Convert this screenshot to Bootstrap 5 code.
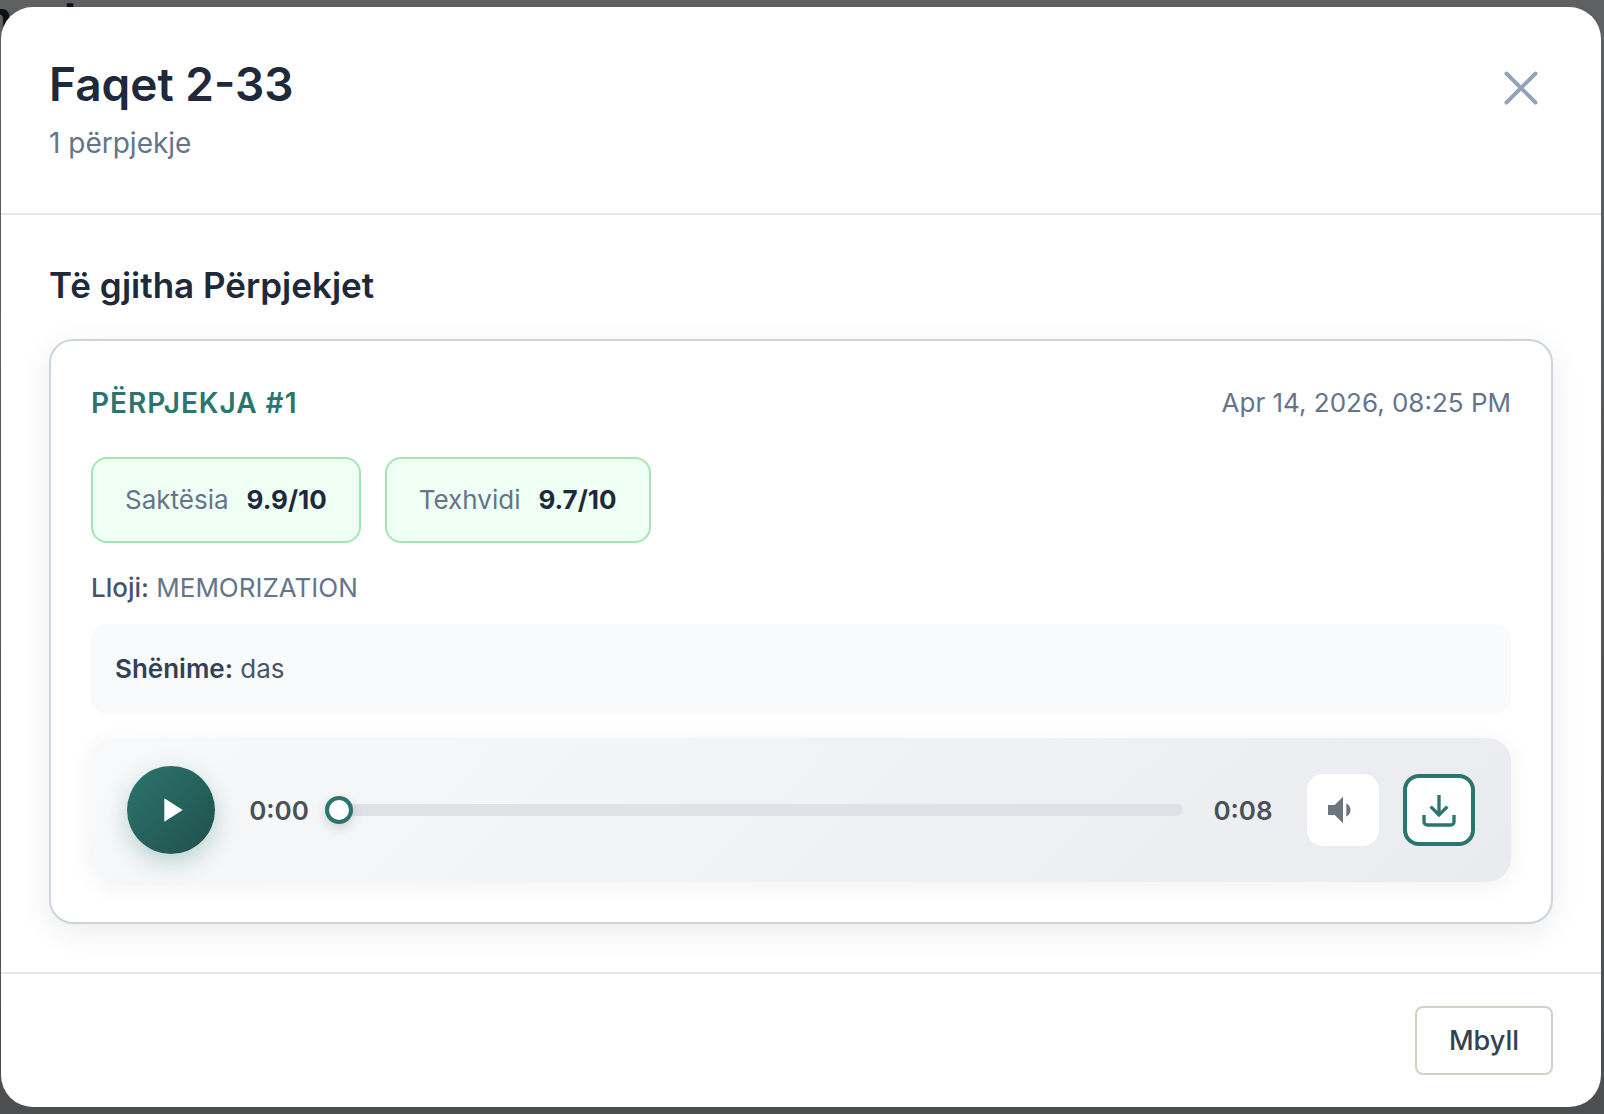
<!DOCTYPE html>
<html lang="sq">
<head>
<meta charset="utf-8">
<meta name="viewport" content="width=device-width, initial-scale=1">
<title>Faqet 2-33</title>
<link href="https://cdn.jsdelivr.net/npm/bootstrap@5.3.0/dist/css/bootstrap.min.css" rel="stylesheet">
<style>
  body { font-family: Inter, "Liberation Sans", sans-serif; background: linear-gradient(#5f6062, #525252 70%, #4d4e50); min-height: 100vh; overflow: hidden; color: #1e293b; }
  .behind-title { position: absolute; left: -28px; top: -11px; font-size: 44px; line-height: 56px; font-weight: 700; color: #0d1117; white-space: nowrap; }
  .sheet-wrap { position: relative; padding: 7px 3px 7px 1px; }
  .modal-content { border: 0; border-radius: 32px; min-height: calc(100vh - 14px); color: inherit; background: #fff; }
  .modal-header { padding: 48px; border-bottom: 2px solid #e2e8f0; border-radius: 0; }
  .modal-header h1 { font-size: 46px; line-height: 58px; font-weight: 600; margin-bottom: 8px; }
  .sub-line { font-size: 28px; line-height: 44px; color: #64748b; }
  .close-x { border: 0; background: none; padding: 8px; margin: 5px 4px 0 0; color: #94a3b8; line-height: 0; }
  .modal-body { padding: 48px; }
  .modal-body h2 { font-size: 35px; line-height: 44px; font-weight: 600; margin-bottom: 32px; }
  .attempt { border: 2px solid #cbd5e1; border-radius: 24px; padding: 40px; box-shadow: 0 8px 32px rgba(0,0,0,.08); background: #fff; }
  .attempt-no { font-size: 28px; line-height: 44px; font-weight: 600; letter-spacing: 1px; color: #2a766e; text-transform: uppercase; margin: 0; }
  .t26 { font-size: 26px; line-height: 42px; color: #64748b; }
  .type-key { color: #475569; }
  .scores { gap: 24px; margin: 32px 0 24px; }
  .score { background: #f0fff4; border: 2px solid #a5e5b5; border-radius: 16px; padding: 20px 32px; gap: 18px; }
  .score strong { color: #1e293b; font-weight: 700; }
  .note { background: #f8fafc; border-radius: 16px; padding: 24px; margin: 15px 0 24px; color: #475569; }
  .note-key { color: #334155; }
  .player { border-radius: 24px; padding: 28px 36px; gap: 24px; background: linear-gradient(135deg, #f8f9fa, #e9ebef); box-shadow: 0 4px 24px rgba(0,0,0,.06); }
  .play { width: 88px; height: 88px; border: 0; color: #fff; background: linear-gradient(135deg, #2a766e, #224f4c); box-shadow: 0 8px 24px rgba(42,118,110,.3); }
  .clock { width: 80px; font-size: 26px; font-weight: 600; color: #495057; text-align: center; }
  .seek { appearance: none; -webkit-appearance: none; background: none; height: 28px; min-width: 0; margin: 0 -4px 0 -18px; }
  .seek::-webkit-slider-runnable-track { height: 12px; border-radius: 6px; background: #dee2e6; }
  .seek::-webkit-slider-thumb { -webkit-appearance: none; width: 28px; height: 28px; margin-top: -8px; border-radius: 50%; background: #fff; border: 4px solid #2a766e; box-shadow: 0 4px 12px rgba(0,0,0,.15); }
  .tool { width: 72px; height: 72px; border: 0; border-radius: 16px; background: #fff; color: #6c757d; padding: 0; }
  .tool-save { border: 4px solid #2a766e; color: #2a766e; }
  .modal-footer { padding: 32px 48px; border-top: 2px solid #e2e8f0; }
  .modal-footer > * { margin: 0; }
  .btn-shut { font-size: 27px; line-height: 41px; font-weight: 500; padding: 12px 32px; border: 2px solid #d4d1c4; border-radius: 8px; color: #334155; background: #fff; }
</style>
</head>
<body>
<div class="behind-title" aria-hidden="true">mest</div>
<main class="sheet-wrap">
  <div class="modal-content">
    <header class="modal-header align-items-start justify-content-between">
      <div>
        <h1>Faqet 2-33</h1>
        <p class="sub-line mb-0">1 përpjekje</p>
      </div>
      <button type="button" class="close-x" aria-label="Mbyll">
        <svg width="40" height="40" viewBox="0 0 40 40" fill="none" stroke="currentColor" stroke-width="4" stroke-linecap="round"><path d="M5.500 5.500l29 29M34.500 5.500l-29 29"/></svg>
      </button>
    </header>
    <div class="modal-body">
      <h2>Të gjitha Përpjekjet</h2>
      <article class="attempt">
        <div class="d-flex justify-content-between align-items-center">
          <h3 class="attempt-no">Përpjekja #1</h3>
          <time class="t26" datetime="2026-04-14T20:25">Apr 14, 2026, 08:25 PM</time>
        </div>
        <div class="scores d-flex flex-wrap">
          <div class="score t26 d-flex"><span>Saktësia</span><strong>9.9/10</strong></div>
          <div class="score t26 d-flex"><span>Texhvidi</span><strong>9.7/10</strong></div>
        </div>
        <p class="t26 mb-0"><span class="fw-medium type-key">Lloji:</span> MEMORIZATION</p>
        <p class="note t26"><strong class="fw-semibold note-key">Shënime:</strong> das</p>
        <div class="player d-flex align-items-center">
          <button type="button" class="play rounded-circle d-flex align-items-center justify-content-center flex-shrink-0" aria-label="Luaj">
            <svg width="40" height="40" viewBox="0 0 24 24" fill="currentColor"><path d="M8 5v14l11-7z"/></svg>
          </button>
          <span class="clock flex-shrink-0">0:00</span>
          <input type="range" class="seek flex-grow-1" min="0" max="8" value="0" aria-label="Pozicioni">
          <span class="clock flex-shrink-0">0:08</span>
          <button type="button" class="tool d-flex align-items-center justify-content-center flex-shrink-0" aria-label="Volumi">
            <svg width="40" height="40" viewBox="0 0 24 24" fill="currentColor"><path d="M3 9v6h4l5 5V4L7 9H3zm13.5 3c0-1.77-1.02-3.29-2.5-4.03v8.05c1.48-.73 2.5-2.25 2.5-4.02z"/></svg>
          </button>
          <button type="button" class="tool tool-save d-flex align-items-center justify-content-center flex-shrink-0" aria-label="Shkarko">
            <svg width="40" height="40" viewBox="0 0 24 24" fill="none" stroke="currentColor" stroke-width="2"><path d="M21 15v4a2 2 0 0 1-2 2H5a2 2 0 0 1-2-2v-4"/><path d="M7 10l5 5 5-5"/><path d="M12 15V3"/></svg>
          </button>
        </div>
      </article>
    </div>
    <footer class="modal-footer">
      <button type="button" class="btn btn-shut">Mbyll</button>
    </footer>
  </div>
</main>
<script src="https://cdn.jsdelivr.net/npm/bootstrap@5.3.0/dist/js/bootstrap.bundle.min.js"></script>
</body>
</html>
